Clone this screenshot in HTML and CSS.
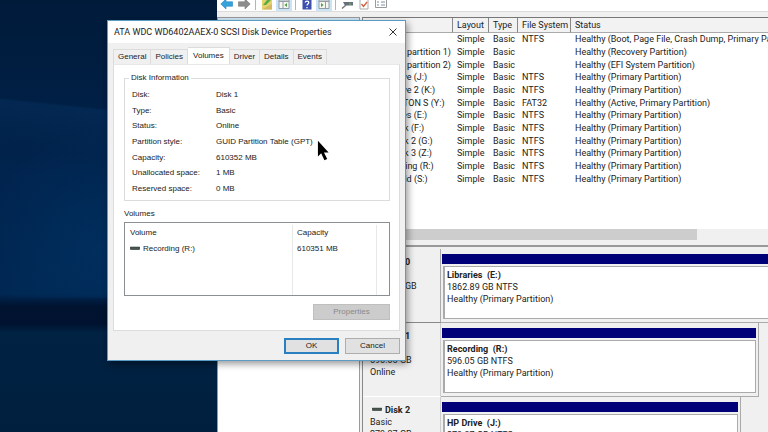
FILE: index.html
```html
<!DOCTYPE html>
<html lang="en">
<head>
<meta charset="utf-8">
<title>Disk Management</title>
<link rel="stylesheet" href="styles.css">
</head>
<body>
<main class="desktop">
  <section class="manager" aria-label="Disk Management">
    <div class="toolbar">
      <button class="tool" aria-label="Back"><svg viewBox="0 0 14 12"><path d="M.8 4 6 -1v2.800h6.500v4.400H6V9z" fill="#35a3dc" stroke="#2383bd" stroke-width=".6"/></svg></button>
      <button class="tool" aria-label="Forward"><svg viewBox="0 0 14 12"><path d="M13.200 4 8 -1v2.800H1.500v4.400H8V9z" fill="#8d8d8d" stroke="#777" stroke-width=".6"/></svg></button>
      <span class="divider"></span>
      <button class="tool" aria-label="Up one level"><svg viewBox="0 0 14 12"><path d="M2 0h10v9.500H2z" fill="#e4d26b"/><path d="M2 9.500 12 4v5.500z" fill="#d3b964"/><path d="M3 5 7 0h4L6 5z" fill="#58ab49"/></svg></button>
      <button class="tool on" aria-label="Show console tree"><svg viewBox="0 0 14 12"><path d="M2 0h10v8.500H2z" fill="#f6f6f0" stroke="#929da6"/><path d="M2 1.500h10M6 2v6.500" stroke="#929da6"/><path d="M10 3v4L7.500 5z" fill="#4d9b45"/></svg></button>
      <span class="divider"></span>
      <button class="tool" aria-label="Help"><svg viewBox="0 0 14 12"><path d="M2.500 0h9v9.500h-9z" fill="#3c50ad"/><path d="M5.200 2.500C5.500.5 9 .7 8.700 2.800 8.500 4 7 4 7 5.500M7 7v1.300" fill="none" stroke="#fff" stroke-width="1.300"/></svg></button>
      <button class="tool on" aria-label="Show action pane"><svg viewBox="0 0 14 12"><path d="M2 0h10v8.500H2z" fill="#f6f6f0" stroke="#929da6"/><path d="M2 1.500h10M8.500 2v6.500" stroke="#929da6"/><path d="M4 3v4l2.500-2z" fill="#4d9b45"/></svg></button>
      <span class="divider"></span>
      <button class="tool" aria-label="Rescan disks"><svg viewBox="0 0 14 12"><path d="M3 2h10v3.500H5z" fill="#667078"/><path d="M6 5 2 8.500" stroke="#777" stroke-width="1.500"/><path d="M9 4h2" stroke="#78b96a"/></svg></button>
      <button class="tool" aria-label="Check"><svg viewBox="0 0 14 12"><path d="M3 -1h8v10H3z" fill="#fff" stroke="#aaa"/><path d="m4.500 4 2 2.500L10 2" fill="none" stroke="#d7593c" stroke-width="1.300"/></svg></button>
      <button class="tool" aria-label="Properties"><svg viewBox="0 0 14 12"><path d="M1.500-.5h11v8h-11z" fill="#fff" stroke="#9a9a9a"/><path d="M3 2h2M3 5h2M7 2h4M7 5h4" stroke="#7d8fa5"/></svg></button>
    </div>
    <div class="panes">
      <aside class="tree"><div class="tree-item"></div></aside>
      <div class="content">
        <div class="volume-list">
          <table class="volumes">
            <colgroup><col class="c-name"><col class="c-layout"><col class="c-type"><col class="c-fs"><col></colgroup>
            <thead><tr><th>Volume</th><th>Layout</th><th>Type</th><th>File System</th><th>Status</th></tr></thead>
            <tbody>
              <tr><td>(C:)</td><td>Simple</td><td>Basic</td><td>NTFS</td><td>Healthy (Boot, Page File, Crash Dump, Primary Partition)</td></tr>
              <tr><td>(Disk 5 partition 1)</td><td>Simple</td><td>Basic</td><td></td><td>Healthy (Recovery Partition)</td></tr>
              <tr><td>(Disk 5 partition 2)</td><td>Simple</td><td>Basic</td><td></td><td>Healthy (EFI System Partition)</td></tr>
              <tr><td>HP Drive (J:)</td><td>Simple</td><td>Basic</td><td>NTFS</td><td>Healthy (Primary Partition)</td></tr>
              <tr><td>HP Drive 2 (K:)</td><td>Simple</td><td>Basic</td><td>NTFS</td><td>Healthy (Primary Partition)</td></tr>
              <tr><td>KINGSTON S (Y:)</td><td>Simple</td><td>Basic</td><td>FAT32</td><td>Healthy (Active, Primary Partition)</td></tr>
              <tr><td>Libraries (E:)</td><td>Simple</td><td>Basic</td><td>NTFS</td><td>Healthy (Primary Partition)</td></tr>
              <tr><td>My Disk (F:)</td><td>Simple</td><td>Basic</td><td>NTFS</td><td>Healthy (Primary Partition)</td></tr>
              <tr><td>My Disk 2 (G:)</td><td>Simple</td><td>Basic</td><td>NTFS</td><td>Healthy (Primary Partition)</td></tr>
              <tr><td>My Disk 3 (Z:)</td><td>Simple</td><td>Basic</td><td>NTFS</td><td>Healthy (Primary Partition)</td></tr>
              <tr><td>Recording (R:)</td><td>Simple</td><td>Basic</td><td>NTFS</td><td>Healthy (Primary Partition)</td></tr>
              <tr><td>WD Gold (S:)</td><td>Simple</td><td>Basic</td><td>NTFS</td><td>Healthy (Primary Partition)</td></tr>
            </tbody>
          </table>
        </div>
        <div class="scrollbar"><div class="thumb"></div></div>
        <div class="disks">
          <article class="disk selected">
            <div class="disk-label"><h2><i class="drive"></i>Disk 0</h2><p>Basic</p><p>1863.02 GB</p><p>Online</p></div>
            <div class="disk-map wide"><div class="bar"></div><div class="part"><h3>Libraries&nbsp; (E:)</h3><p>1862.89 GB NTFS</p><p>Healthy (Primary Partition)</p></div></div>
          </article>
          <article class="disk">
            <div class="disk-label"><h2><i class="drive"></i>Disk 1</h2><p>Basic</p><p>596.05 GB</p><p>Online</p></div>
            <div class="disk-map mid"><div class="bar"></div><div class="part"><h3>Recording&nbsp; (R:)</h3><p>596.05 GB NTFS</p><p>Healthy (Primary Partition)</p></div></div>
          </article>
          <article class="disk">
            <div class="disk-label"><h2><i class="drive"></i>Disk 2</h2><p>Basic</p><p>279.37 GB</p><p>Online</p></div>
            <div class="disk-map short"><div class="bar"></div><div class="part"><h3>HP Drive&nbsp; (J:)</h3><p>279.37 GB NTFS</p><p>Healthy (Primary Partition)</p></div></div>
          </article>
        </div>
      </div>
    </div>
  </section>

  <section class="dialog" role="dialog" aria-labelledby="dialog-title">
    <header class="titlebar">
      <h1 id="dialog-title">ATA WDC WD6402AAEX-0 SCSI Disk Device Properties</h1>
      <button class="close" aria-label="Close"><svg viewBox="0 0 8 8"><path d="m.5.5 7 7m0-7-7 7" stroke="#333" fill="none"/></svg></button>
    </header>
    <div class="tabs" role="tablist">
      <button class="tab" role="tab">General</button><button class="tab" role="tab">Policies</button><button class="tab active" role="tab" aria-selected="true">Volumes</button><button class="tab" role="tab">Driver</button><button class="tab" role="tab">Details</button><button class="tab" role="tab">Events</button>
    </div>
    <div class="page">
      <fieldset class="info">
        <legend>Disk Information</legend>
        <dl>
          <dt>Disk:</dt><dd>Disk 1</dd>
          <dt>Type:</dt><dd>Basic</dd>
          <dt>Status:</dt><dd>Online</dd>
          <dt>Partition style:</dt><dd>GUID Partition Table (GPT)</dd>
          <dt>Capacity:</dt><dd>610352 MB</dd>
          <dt>Unallocated space:</dt><dd>1 MB</dd>
          <dt>Reserved space:</dt><dd>0 MB</dd>
        </dl>
      </fieldset>
      <h2 class="list-title">Volumes</h2>
      <div class="list">
        <table>
          <colgroup><col class="l-name"><col class="l-cap"><col></colgroup>
          <thead><tr><th>Volume</th><th>Capacity</th><th></th></tr></thead>
          <tbody><tr><td><i class="drive"></i>Recording (R:)</td><td>610351 MB</td><td></td></tr></tbody>
        </table>
      </div>
      <button class="btn properties" disabled>Properties</button>
    </div>
    <footer class="actions"><button class="btn default">OK</button><button class="btn">Cancel</button></footer>
  </section>

  <svg class="cursor" viewBox="0 0 14 22" aria-hidden="true"><path d="M1 0v17l3.500-3.500L8 21l3-1.500-3.500-7h5z" fill="#000"/></svg>
</main>
</body>
</html>
```
FILE: styles.css
```css
* { box-sizing: border-box; margin: 0; padding: 0; }
body { font: 9px/12px Roboto, "Noto Sans", sans-serif; color: #222; }
h1, h2, h3 { font-size: inherit; font-weight: inherit; }
button { font: inherit; color: inherit; border: 0; background: none; }
i.drive { display: inline-block; width: 10px; height: 4px; margin-right: 3px; vertical-align: 1px; background: linear-gradient(#c4cbc7 1px, #3c4742 1px, #59645f); border-radius: 1px; }

.desktop {
  position: relative; height: 100vh; overflow: hidden;
  background:
    linear-gradient(186deg, transparent 49%, #0b3f7444 51%, transparent 90%) 0 60px / 217px 100px no-repeat,
    radial-gradient(ellipse 120px 120px at 100px 250px, #003a7066, transparent) 0 0 / 217px 298px no-repeat,
    linear-gradient(#001b3a, #001f44 23%, #00244e 40%, #002752 68%, #00132f 71%, #001230 75%, #002243 77%, #001f3e);
}

.manager { position: absolute; inset: 0 0 0 217px; display: flex; flex-direction: column; background: #f0f0f0; overflow: hidden; }
.toolbar { display: flex; align-items: flex-start; height: 12px; flex: none; background: #fff; border-bottom: 1px solid #dcdcdc; padding-left: 2px; gap: 1px; }
.tool { width: 16px; height: 11px; display: flex; justify-content: center; }
.tool svg { width: 14px; height: 12px; flex: none; }
.tool.on { background: #cbe4f6; }
.divider { width: 1px; height: 10px; background: #b5b5b5; margin: 0 2px; }
.panes { flex: 1; display: flex; min-height: 0; padding-top: 5px; }
.tree { width: 143px; flex: none; background: #fff; border: 1px solid #9a9a9a; border-bottom: 0; }
.tree-item { height: 12px; background: #cde5f5; }
.content { flex: 1; min-width: 0; display: flex; flex-direction: column; margin-left: 2px; border-left: 1px solid #888; border-top: 1px solid #777; }
.volume-list { height: 211px; flex: none; background: #fff; overflow: hidden; }
.volumes { table-layout: fixed; width: 100%; border-collapse: separate; border-spacing: 0; height: 167px; white-space: nowrap; }
.volumes th { height: 14px; line-height: 14px; text-align: left; font-weight: 400; background: #f2f2f2; border-right: 1px solid #888; border-bottom: 1px solid #aaa; padding-left: 4px; }
.volumes th:last-child { border-right: 0; }
.volumes td { line-height: 12px; padding-left: 4px; }
.volumes td:first-child { padding-left: 14px; }
.c-name { width: 90px; } .c-layout { width: 36px; } .c-type { width: 29px; } .c-fs { width: 53px; }
.scrollbar { height: 12px; flex: none; background: #f0f0f0; padding-right: 71px; }
.thumb { height: 11px; background: #cdcdcd; }
.disks { flex: 1; margin-top: 4px; border-top: 2px solid #999; overflow: hidden; padding-top: 2px; }
.disk { height: 74px; display: flex; }
.disk-label { width: 78px; flex: none; padding: 7px 0 0 7px; border-right: 1px solid #ccc; border-bottom: 1px solid #fff; }
.selected .disk-label { border-right-color: #aaa; border-bottom-color: #888; }
.disk-label h2, .part h3 { font-weight: 700; }
.disk-label .drive { margin: 0 3px 0 2px; vertical-align: 2px; }
.disk-label p, .part p { line-height: 12px; }
.disk-map { display: flex; flex-direction: column; padding: 5px 2px 3px 1px; border-bottom: 1px solid #aaa; border-right: 1px solid #aaa; }
.wide { width: 400px; flex: none; } .mid { width: 318px; } .short { width: 300px; }
.bar { height: 10px; background: #000078; margin-bottom: 2px; }
.part { flex: 1; background: #fff; border: 1px solid #aaa; border-left-width: 2px; margin-left: 1px; padding: 2px 0 0 2px; white-space: nowrap; }

.dialog { position: absolute; left: 107px; top: 20px; width: 299px; background: #f0f0f0; border: 1px solid #5b9cc4; box-shadow: 2px 3px 7px #0006; font: 8px/12px "Liberation Sans", Arial, sans-serif; }
.titlebar { height: 22px; display: flex; align-items: center; justify-content: space-between; background: #fff; padding: 0 7px 0 6px; font: 9px/12px Roboto, sans-serif; }
.close { width: 9px; height: 9px; display: flex; }
.close svg { width: 8px; height: 8px; }
.tabs { display: flex; align-items: flex-end; height: 21px; padding-left: 5px; }
.tab { height: 15px; padding: 0 4px; border: 1px solid #dcdcdc; border-width: 1px 1px 0 0; }
.tab:first-child { border-left-width: 1px; }
.tab.active { height: 17px; padding: 0 5px; background: #fff; }
.page { margin: 0 5px; border: 1px solid #dcdcdc; border-top-color: #e8e8e8; background: #fff; padding: 7px 9px 10px 10px; display: flex; flex-direction: column; }
.info { border: 1px solid #dcdcdc; padding: 3px 7px; }
.info legend { padding: 0 2px; margin-left: -3px; }
.info dl { display: grid; grid-template-columns: 84px 1fr; grid-auto-rows: 1fr; height: 110px; align-items: center; white-space: nowrap; }
.list-title { margin: 7px 0 2px; }
.list { height: 74px; border: 1px solid #8a8f96; padding: 2px 1px 0; }
.list table { width: 100%; height: 100%; table-layout: fixed; border-spacing: 0; }
.list th, .list td { text-align: left; font-weight: 400; padding-left: 4px; border-right: 1px solid #e8e8e8; height: 16px; vertical-align: top; line-height: 16px; }
.list th:last-child, .list td:last-child { border-right: 0; }
.l-name { width: 167px; } .l-cap { width: 84px; }
.btn { width: 55px; height: 16px; border: 1px solid #adadad; background: #e1e1e1; text-align: center; }
.properties { width: 77px; align-self: flex-end; margin-top: 8px; background: #ccc; border-color: #bfbfbf; color: #8a8a8a; }
.btn.default { border: 2px solid #2a7fc0; }
.actions { display: flex; justify-content: flex-end; gap: 6px; padding: 7px 5px 6px; }
.cursor { position: absolute; left: 317px; top: 140px; width: 13px; height: 22px; }
```
